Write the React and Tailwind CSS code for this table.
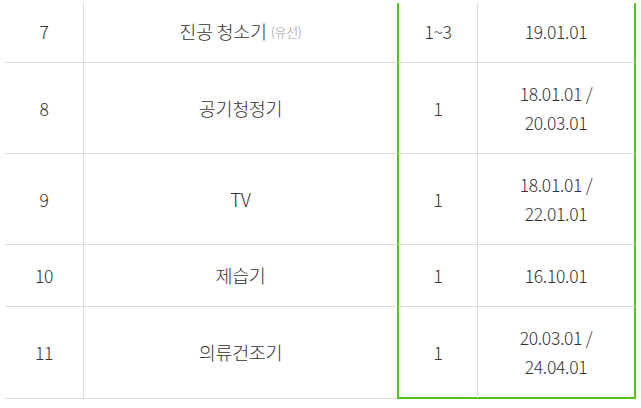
const rows = [
  { no: '7', name: '진공 청소기', sub: '(유선)', qty: '1~3', dates: ['19.01.01'], h: 'h-[60px]', pad: 'pb-[3px]' },
  { no: '8', name: '공기청정기', qty: '1', dates: ['18.01.01 /', '20.03.01'], h: 'h-[91px]', pad: '' },
  { no: '9', name: 'TV', qty: '1', dates: ['18.01.01 /', '22.01.01'], h: 'h-[91px]', pad: '' },
  { no: '10', name: '제습기', qty: '1', dates: ['16.10.01'], h: 'h-[62px]', pad: '' },
  { no: '11', name: '의류건조기', qty: '1', dates: ['20.03.01 /', '24.04.01'], h: 'h-[92px]', pad: '' },
];

export default function App() {
  return (
    <div
      className="w-[641px] h-[408px] bg-white pt-[3px] pl-[5px] text-[#333] overflow-hidden"
      style={{ fontFamily: '"Noto Sans CJK KR", "Noto Sans", sans-serif' }}
    >
      <div className="w-[631px]">
        {rows.map((r, i) => {
          const last = i === rows.length - 1;
          return (
            <div
              key={r.no}
              className={`grid grid-cols-[79px_313px_81px_158px] ${r.h} text-[17.5px] font-light leading-[29px] tracking-[-0.3px]`}
            >
              <div className={`flex items-center justify-center border-r border-b border-[#dddddd] ${r.pad}`}>
                {r.no}
              </div>
              <div className={`flex items-center justify-center border-b border-[#dddddd] ${r.pad}`}>
                <span className="text-[18.5px]">{r.name}</span>
                {r.sub && <span className="ml-[4px] text-[13px] text-[#999]">{r.sub}</span>}
              </div>
              <div
                className={`flex items-center justify-center border-l-2 border-l-[#52c41a] border-r border-r-[#dddddd] ${r.pad} ${
                  last ? 'border-b-2 border-b-[#52c41a]' : 'border-b border-b-[#dddddd]'
                }`}
              >
                {r.qty}
              </div>
              <div
                className={`flex flex-col items-center justify-center border-r-2 border-r-[#52c41a] ${r.pad} ${
                  last ? 'border-b-2 border-b-[#52c41a]' : 'border-b border-b-[#dddddd]'
                }`}
              >
                {r.dates.map((d) => (
                  <span key={d}>{d}</span>
                ))}
              </div>
            </div>
          );
        })}
      </div>
    </div>
  );
}
